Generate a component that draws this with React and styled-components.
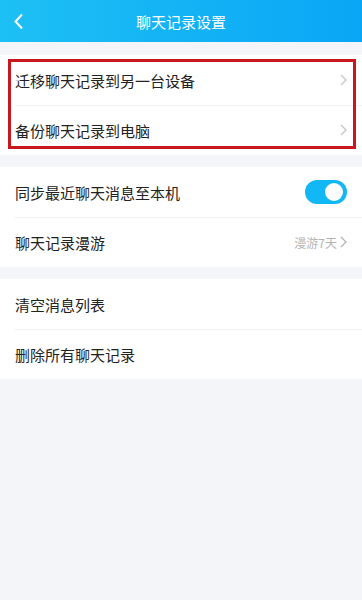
import React from "react";
import styled, { createGlobalStyle } from "styled-components";

const GlobalStyle = createGlobalStyle`
  html, body {
    margin: 0;
    padding: 0;
    background: #f4f5f9;
    font-family: "Noto Sans CJK SC", "Noto Sans", sans-serif;
  }
`;

const Page = styled.div`
  min-height: 600px;
  background: #f4f5f9;
`;

const Header = styled.div`
  height: 42px;
  background: linear-gradient(90deg, #1dc0f4 0%, #0aa6f6 100%);
  display: flex;
  align-items: center;
  justify-content: center;
  position: relative;
  color: #fff;
  font-size: 15px;
`;

const Back = styled.span`
  position: absolute;
  left: 13px;
  top: 13px;
  display: flex;
`;

const Group = styled.div`
  background: #fff;
  margin-top: ${(p) => p.gap}px;
  position: relative;
`;

const Row = styled.div`
  height: 50px;
  display: flex;
  align-items: center;
  padding: 0 15px;
  font-size: 15px;
  color: #222;
  position: relative;
  & + &::before {
    content: "";
    position: absolute;
    top: 0;
    left: 15px;
    right: 0;
    height: 1px;
    background: #f0f0f2;
  }
`;

const Label = styled.span`
  flex: 1;
`;

const Extra = styled.span`
  display: flex;
  align-items: center;
  gap: 3px;
  font-size: 12px;
  color: #b3b3b3;
`;

const Toggle = styled.span`
  width: 42px;
  height: 24px;
  border-radius: 12px;
  background: #12b7f5;
  position: relative;
  margin-right: 0;
  &::after {
    content: "";
    position: absolute;
    right: 4px;
    top: 3px;
    width: 18px;
    height: 18px;
    border-radius: 50%;
    background: #fff;
  }
`;

const Highlight = styled.div`
  position: absolute;
  top: 4px;
  left: 8px;
  right: 6px;
  bottom: 6px;
  border: 3px solid #c8171e;
  pointer-events: none;
`;

const Chevron = ({ color = "#c4c4c4" }) => (
  <svg width="7" height="12" viewBox="0 0 7 12">
    <path d="M1 1l5 5-5 5" fill="none" stroke={color} strokeWidth="1.3" />
  </svg>
);

export default function App() {
  return (
    <Page>
      <GlobalStyle />
      <Header>
        <Back>
          <svg width="12" height="17" viewBox="0 0 12 17">
            <path d="M9 1.5L2.5 8.5 9 15.5" fill="none" stroke="#fff" strokeWidth="2" />
          </svg>
        </Back>
        聊天记录设置
      </Header>
      <Group gap={13}>
        <Row>
          <Label>迁移聊天记录到另一台设备</Label>
          <Chevron />
        </Row>
        <Row>
          <Label>备份聊天记录到电脑</Label>
          <Chevron />
        </Row>
        <Highlight />
      </Group>
      <Group gap={12}>
        <Row>
          <Label>同步最近聊天消息至本机</Label>
          <Toggle />
        </Row>
        <Row>
          <Label>聊天记录漫游</Label>
          <Extra>
            漫游7天
            <Chevron color="#b3b3b3" />
          </Extra>
        </Row>
      </Group>
      <Group gap={12}>
        <Row>
          <Label>清空消息列表</Label>
        </Row>
        <Row>
          <Label>删除所有聊天记录</Label>
        </Row>
      </Group>
    </Page>
  );
}
